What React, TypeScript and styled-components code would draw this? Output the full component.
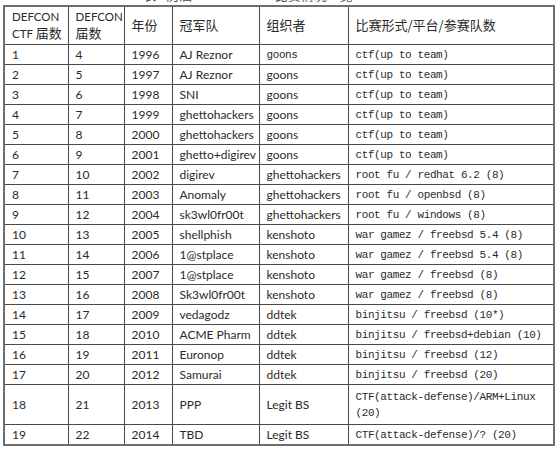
import React from 'react'
import styled, { createGlobalStyle } from 'styled-components'

const GlobalStyle = createGlobalStyle`
  html, body {
    margin: 0;
    padding: 0;
    background: #fff;
  }
  body {
    font-family: Lato, "Noto Sans CJK SC", sans-serif;
    color: #2a2a2a;
  }
`

type Row = [number, number, number, string, string, string]

const rows: Row[] = [
  [1, 4, 1996, 'AJ Reznor', 'goons', 'ctf(up to team)'],
  [2, 5, 1997, 'AJ Reznor', 'goons', 'ctf(up to team)'],
  [3, 6, 1998, 'SNI', 'goons', 'ctf(up to team)'],
  [4, 7, 1999, 'ghettohackers', 'goons', 'ctf(up to team)'],
  [5, 8, 2000, 'ghettohackers', 'goons', 'ctf(up to team)'],
  [6, 9, 2001, 'ghetto+digirev', 'goons', 'ctf(up to team)'],
  [7, 10, 2002, 'digirev', 'ghettohackers', 'root fu / redhat 6.2 (8)'],
  [8, 11, 2003, 'Anomaly', 'ghettohackers', 'root fu / openbsd (8)'],
  [9, 12, 2004, 'sk3wl0fr00t', 'ghettohackers', 'root fu / windows (8)'],
  [10, 13, 2005, 'shellphish', 'kenshoto', 'war gamez / freebsd 5.4 (8)'],
  [11, 14, 2006, '1@stplace', 'kenshoto', 'war gamez / freebsd 5.4 (8)'],
  [12, 15, 2007, '1@stplace', 'kenshoto', 'war gamez / freebsd (8)'],
  [13, 16, 2008, 'Sk3wl0fr00t', 'kenshoto', 'war gamez / freebsd (8)'],
  [14, 17, 2009, 'vedagodz', 'ddtek', 'binjitsu / freebsd (10*)'],
  [15, 18, 2010, 'ACME Pharm', 'ddtek', 'binjitsu / freebsd+debian (10)'],
  [16, 19, 2011, 'Euronop', 'ddtek', 'binjitsu / freebsd (12)'],
  [17, 20, 2012, 'Samurai', 'ddtek', 'binjitsu / freebsd (20)'],
  [18, 21, 2013, 'PPP', 'Legit BS', 'CTF(attack-defense)/ARM+Linux\n(20)'],
  [19, 22, 2014, 'TBD', 'Legit BS', 'CTF(attack-defense)/? (20)'],
]

const colWidths = [64, 56, 48, 87, 89, 206]

const Page = styled.div`
  width: 560px;
  height: 450px;
  overflow: hidden;
  padding-left: 3px;
  box-sizing: border-box;
`

// only the bottom edge of the caption line peeks out above the table
const Caption = styled.div`
  width: 550px;
  height: 5px;
  overflow: hidden;
  display: flex;
  align-items: flex-end;
  justify-content: center;
  padding: 0 60px 0 0;
  box-sizing: border-box;
  font-family: "Noto Sans CJK SC", sans-serif;
  font-size: 13px;
  line-height: 13px;
  color: #555;
`

const CaptionText = styled.span`
  display: block;
  margin-bottom: 3px;
  transform: translateY(-1px);
`

const Table = styled.table`
  border-collapse: collapse;
  table-layout: fixed;
  width: 550px;
  border: 2px solid #6e6e6e;
`

const HeadCell = styled.th`
  border: 1px solid #4a4a4a;
  height: 37px;
  padding: 0 7px;
  text-align: left;
  vertical-align: middle;
  font-weight: normal;
  font-size: 11.5px;
  line-height: 16px;
  font-family: Lato, "Noto Sans CJK SC", sans-serif;
  white-space: nowrap;
  color: #2a2a2a;
`

const CjkLabel = styled.span`
  font-family: "Noto Sans CJK SC", sans-serif;
  font-size: 13px;
`

const BodyRow = styled.tr<{ $tall?: boolean }>`
  td {
    height: ${({ $tall }) => ($tall ? '39px' : '19px')};
  }
`

const Cell = styled.td<{ $mono?: boolean }>`
  border: 1px solid #4a4a4a;
  padding: 0 7px;
  vertical-align: middle;
  white-space: pre;
  font-family: ${({ $mono }) =>
    $mono ? '"Liberation Mono", "Noto Sans CJK SC", monospace' : 'Lato, "Noto Sans CJK SC", sans-serif'};
  font-size: ${({ $mono }) => ($mono ? '11px' : '12px')};
  letter-spacing: ${({ $mono }) => ($mono ? '-0.4px' : '0')};
  line-height: 16px;
  color: #2a2a2a;
`

export default function App() {
  return (
    <Page>
      <GlobalStyle />
      <Caption>
        <CaptionText>表1 历届 DEFCON CTF 比赛情况一览</CaptionText>
      </Caption>
      <Table>
        <colgroup>
          {colWidths.map((w, i) => (
            <col key={i} style={{ width: w }} />
          ))}
        </colgroup>
        <thead>
          <tr>
            <HeadCell>
              DEFCON
              <br />
              CTF <CjkLabel>届数</CjkLabel>
            </HeadCell>
            <HeadCell>
              DEFCON
              <br />
              <CjkLabel>届数</CjkLabel>
            </HeadCell>
            <HeadCell><CjkLabel>年份</CjkLabel></HeadCell>
            <HeadCell><CjkLabel>冠军队</CjkLabel></HeadCell>
            <HeadCell><CjkLabel>组织者</CjkLabel></HeadCell>
            <HeadCell><CjkLabel>比赛形式/平台/参赛队数</CjkLabel></HeadCell>
          </tr>
        </thead>
        <tbody>
          {rows.map(([ctf, dc, year, winner, org, format]) => (
            <BodyRow key={ctf} $tall={format.includes('\n')}>
              <Cell>{ctf}</Cell>
              <Cell>{dc}</Cell>
              <Cell>{year}</Cell>
              <Cell>{winner}</Cell>
              <Cell $mono={ctf === 1}>{org}</Cell>
              <Cell $mono>{format}</Cell>
            </BodyRow>
          ))}
        </tbody>
      </Table>
    </Page>
  )
}
